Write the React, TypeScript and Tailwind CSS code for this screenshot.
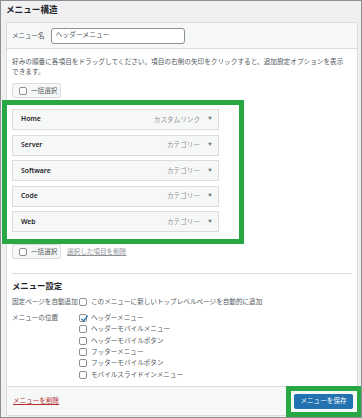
import React from 'react';

const items = [
  { name: 'Home', type: 'カスタムリンク' },
  { name: 'Server', type: 'カテゴリー' },
  { name: 'Software', type: 'カテゴリー' },
  { name: 'Code', type: 'カテゴリー' },
  { name: 'Web', type: 'カテゴリー' },
];

const locations = [
  { label: 'ヘッダーメニュー', checked: true },
  { label: 'ヘッダーモバイルメニュー', checked: false },
  { label: 'ヘッダーモバイルボタン', checked: false },
  { label: 'フッターメニュー', checked: false },
  { label: 'フッターモバイルボタン', checked: false },
  { label: 'モバイルスライドインメニュー', checked: false },
];

function Checkbox({ checked = false }: { checked?: boolean }) {
  return (
    <span className="relative inline-flex h-[8px] w-[8px] shrink-0 items-center justify-center rounded-[2px] border border-[#8c8f94] bg-white">
      {checked && (
        <svg viewBox="0 0 10 10" className="absolute -top-[1px] left-0 h-[9px] w-[9px]">
          <path d="M1.5 5.2 L4 7.6 L8.6 1.8" fill="none" stroke="#2271b1" strokeWidth="1.4" />
        </svg>
      )}
    </span>
  );
}

function BulkSelect() {
  return (
    <div className="flex h-[15px] w-[49px] items-center gap-[4px] rounded-[2px] border border-[#dcdcde] bg-[#f6f7f7] pl-[6px] text-[6.6px] text-[#50575e]">
      <Checkbox />
      <span>一括選択</span>
    </div>
  );
}

export default function App() {
  return (
    <div
      className="relative h-[418px] w-[362px] overflow-hidden border border-[#8c8f94] bg-[#f0f0f1] text-[#1d2327]"
      style={{ fontFamily: '"Noto Sans", "Noto Sans CJK JP", sans-serif' }}
    >
      {/* title */}
      <div className="h-[21px] pl-[5px] pt-[2px] text-[8.6px] font-bold leading-[14px]">メニュー構造</div>

      {/* panel */}
      <div className="ml-[5px] w-[352px] border border-[#dcdcde] bg-white">
        <div className="flex h-[26px] items-center border-b border-[#dcdcde] bg-[#f6f7f7] pl-[5px]">
          <span className="text-[6.5px] text-[#50575e]">メニュー名</span>
          <div className="ml-[6px] flex h-[16px] w-[134px] items-center rounded-[3px] border border-[#8c8f94] bg-white pl-[4px] text-[6.8px] text-[#50575e]">
            ヘッダーメニュー
          </div>
        </div>

        <div className="px-[5px] pt-[8px]">
          <p className="pr-[6px] text-[6.65px] leading-[9.5px] text-[#50575e]">
            好みの順番に各項目をドラッグしてください。項目の右側の矢印をクリックすると、追加設定オプションを表示できます。
          </p>
          <div className="mt-[7px]">
            <BulkSelect />
          </div>

          <div className="mt-[11px] flex w-[207px] flex-col gap-[4.6px]">
            {items.map((it) => (
              <div
                key={it.name}
                className="flex h-[21px] items-center justify-between border border-[#dcdcde] bg-[#f6f7f7] pl-[8px] pr-[6px]"
              >
                <span className="text-[6.8px] font-semibold">{it.name}</span>
                <span className="flex items-center gap-[8px] text-[6.6px] text-[#8c8f94]">
                  {it.type}
                  <span className="text-[4px] text-[#787c82]">▼</span>
                </span>
              </div>
            ))}
          </div>

          <div className="mt-[12px] flex items-center gap-[6px]">
            <BulkSelect />
            <span className="text-[6.6px] text-[#8c8f94] underline">選択した項目を削除</span>
          </div>

          <div className="mt-[14px] border-t border-[#dcdcde]" />

          <div className="pt-[6px] text-[8.4px] font-bold leading-[12px]">メニュー設定</div>

          <div className="mt-[4px] flex h-[12px] items-center text-[6.6px] text-[#50575e]">
            <span className="w-[67px]">固定ページを自動追加</span>
            <Checkbox />
            <span className="ml-[4px]">このメニューに新しいトップレベルページを自動的に追加</span>
          </div>

          <div className="mt-[4px] flex text-[6.6px] text-[#50575e]">
            <span className="w-[67px] leading-[11.3px]">メニューの位置</span>
            <div className="flex flex-col">
              {locations.map((l) => (
                <div key={l.label} className="flex h-[11.3px] items-center gap-[4px]">
                  <Checkbox checked={l.checked} />
                  <span>{l.label}</span>
                </div>
              ))}
            </div>
          </div>
          <div className="h-[6px]" />
        </div>

        <div className="flex h-[29px] items-center justify-between border-t border-[#dcdcde] bg-[#f6f7f7] pl-[6px] pr-[4px]">
          <span className="text-[6.6px] text-[#b32d2e] underline">メニューを削除</span>
          <div className="flex h-[15px] w-[59px] items-center justify-center rounded-[2px] bg-[#2271b1] text-[6.6px] text-white">
            メニューを保存
          </div>
        </div>
      </div>

      {/* annotation boxes */}
      <div className="absolute left-[1px] top-[99px] h-[144px] w-[242px] border-[5px] border-[#28a745]" />
      <div className="absolute left-[285px] top-[385px] h-[31px] w-[76px] border-[5px] border-[#28a745]" />
    </div>
  );
}
